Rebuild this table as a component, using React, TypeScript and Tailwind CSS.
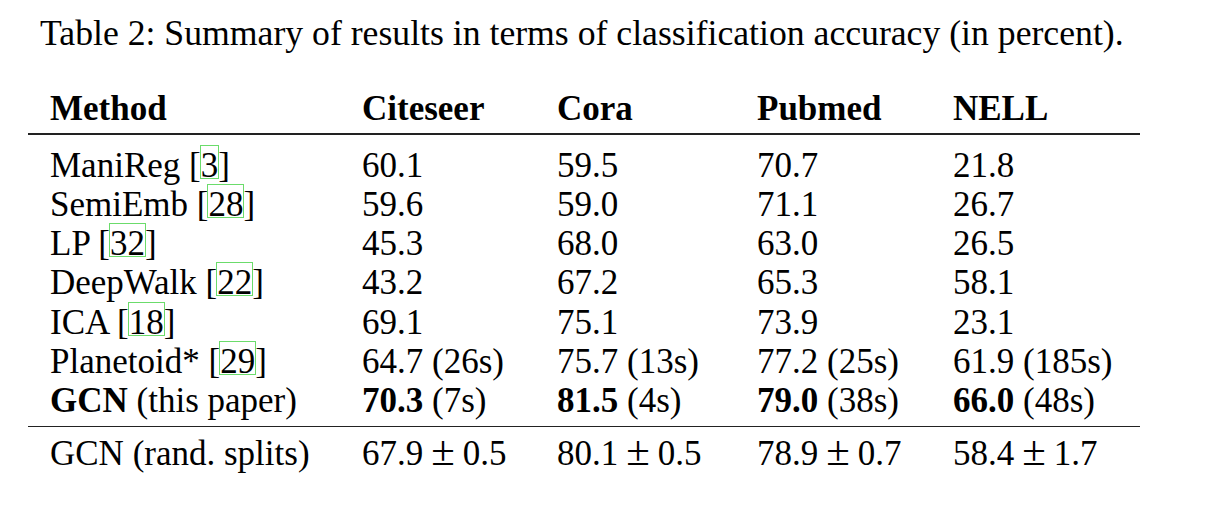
import React from "react";

const serif = { fontFamily: '"Liberation Serif", "Times New Roman", serif' };

function Cite({ n }: { n: string }) {
  return (
    <span>
      [
      <span className="relative">
        {n}
        <span className="absolute -left-[1px] -right-[1px] -top-[1px] bottom-[6px] border border-[#6bdc6b]" />
      </span>
      ]
    </span>
  );
}

function Pm({ a, b }: { a: string; b: string }) {
  return (
    <span>
      {a}
      <span className="mx-[8px] text-[43px] leading-[0]">±</span>
      {b}
    </span>
  );
}

type Row = React.ReactNode[];

const rows: Row[] = [
  [<>ManiReg <Cite n="3" /></>, "60.1", "59.5", "70.7", "21.8"],
  [<>SemiEmb <Cite n="28" /></>, "59.6", "59.0", "71.1", "26.7"],
  [<>LP <Cite n="32" /></>, "45.3", "68.0", "63.0", "26.5"],
  [<>DeepWalk <Cite n="22" /></>, "43.2", "67.2", "65.3", "58.1"],
  [<>ICA <Cite n="18" /></>, "69.1", "75.1", "73.9", "23.1"],
  [<>Planetoid* <Cite n="29" /></>, "64.7 (26s)", "75.7 (13s)", "77.2 (25s)", "61.9 (185s)"],
  [
    <><b>GCN</b> (this paper)</>,
    <><b>70.3</b> (7s)</>,
    <><b>81.5</b> (4s)</>,
    <><b>79.0</b> (38s)</>,
    <><b>66.0</b> (48s)</>,
  ],
];

const cols = "grid grid-cols-[312px_195px_200px_196px_1fr] pl-[22px]";

export default function App() {
  return (
    <div className="w-[1220px] h-[506px] bg-white text-black text-[35px]" style={serif}>
      <p className="pt-[14px] pl-[40px] leading-[39px] text-[35.7px]">
        Table 2: Summary of results in terms of classification accuracy (in percent).
      </p>

      <div className="ml-[28px] w-[1112px] mt-[36px]">
        <div className={`${cols} font-bold leading-[39px] pb-[5px]`}>
          <div>Method</div>
          <div>Citeseer</div>
          <div>Cora</div>
          <div>Pubmed</div>
          <div>NELL</div>
        </div>
        <div className="h-[1.5px] bg-[#222]" />

        <div className="pt-[11px] pb-[5px]">
          {rows.map((r, i) => (
            <div key={i} className={`${cols} leading-[39.3px] whitespace-nowrap`}>
              {r.map((c, j) => (
                <div key={j}>{c}</div>
              ))}
            </div>
          ))}
        </div>
        <div className="h-[1.5px] bg-[#222]" />

        <div className={`${cols} leading-[39px] pt-[7px] whitespace-nowrap`}>
          <div>GCN (rand. splits)</div>
          <div><Pm a="67.9" b="0.5" /></div>
          <div><Pm a="80.1" b="0.5" /></div>
          <div><Pm a="78.9" b="0.7" /></div>
          <div><Pm a="58.4" b="1.7" /></div>
        </div>
      </div>
    </div>
  );
}
